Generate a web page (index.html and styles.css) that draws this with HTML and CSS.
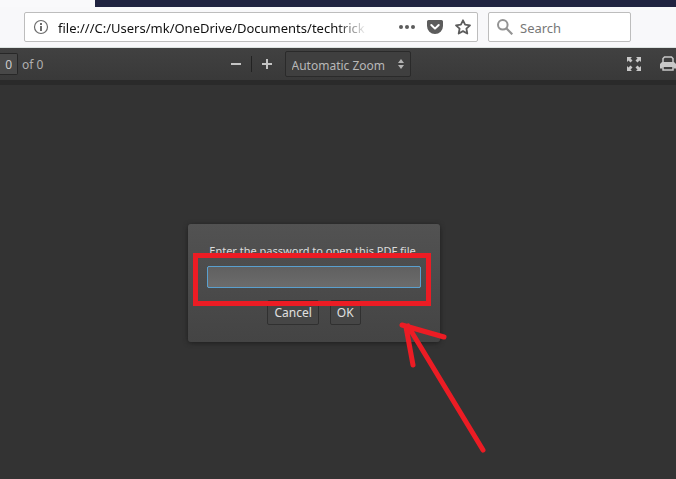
FILE: index.html
```
<!DOCTYPE html>
<html lang="en">

<head>
  <meta charset="utf-8">
  <title>PDF viewer</title>
  <link rel="stylesheet" href="styles.css">
</head>

<body>

  <!-- Browser chrome -->
  <div class="tabstrip"></div>
  <header class="navbar">
    <div class="urlbar">
      <svg class="icon-info" width="16" height="16" viewBox="0 0 16 16">
        <circle cx="8" cy="8" r="6.5" fill="none" stroke="#6b6b6b" stroke-width="1.2" />
        <path d="M7 7h2v5H7zM7 4h2v2H7z" fill="#6b6b6b" />
      </svg>
      <input class="url" type="text" aria-label="Address" value="file:///C:/Users/mk/OneDrive/Documents/techtrick">
      <button class="nav-button" aria-label="Page actions">
        <svg width="16" height="16" viewBox="0 0 16 16" fill="#5c5c5c">
          <circle cx="2" cy="8" r="2" />
          <circle cx="8" cy="8" r="2" />
          <circle cx="14" cy="8" r="2" />
        </svg>
      </button>
      <button class="nav-button" aria-label="Save to Pocket">
        <svg width="16" height="16" viewBox="0 0 16 16">
          <path d="M1.5 1h13A1.5 1.5 0 0 1 16 2.5V7A8 8 0 0 1 0 7V2.5A1.5 1.5 0 0 1 1.5 1z" fill="#5c5c5c" />
          <path d="M4.3 6L8 9.6L11.7 6" fill="none" stroke="#fff" stroke-width="2" stroke-linecap="round" stroke-linejoin="round" />
        </svg>
      </button>
      <button class="nav-button" aria-label="Bookmark">
        <svg width="16" height="16" viewBox="0 0 16 16">
          <path d="M8 1.3L10.1 5.7L15 6.3L11.4 9.6L12.3 14.5L8 12.1L3.7 14.5L4.6 9.6L1 6.3L5.9 5.7z" fill="none" stroke="#5c5c5c" stroke-width="1.8" stroke-linejoin="round" />
        </svg>
      </button>
    </div>
    <div class="searchbar">
      <svg width="16" height="16" viewBox="0 0 16 16" fill="none" stroke="#939393" stroke-width="2">
        <circle cx="5.8" cy="5.8" r="4.8" />
        <path d="M9.3 9.3L15.3 15.3" stroke-width="2.2" />
      </svg>
      <input class="search" type="text" aria-label="Search" placeholder="Search">
    </div>
  </header>

  <!-- Viewer toolbar -->
  <div class="toolbar">
    <div class="pages">
      <input class="page-number" type="text" id="page" value="0" aria-label="Page">
      <label for="page">of 0</label>
    </div>
    <div class="zoom">
      <button class="tool" aria-label="Zoom out">
        <svg width="12" height="12" viewBox="0 0 12 12"><path d="M1 5h10v2H1z" fill="#c4c4c4" /></svg>
      </button>
      <span class="separator"></span>
      <button class="tool" aria-label="Zoom in">
        <svg width="12" height="12" viewBox="0 0 12 12"><path d="M1 5h4V1h2v4h4v2H7v4H5V7H1z" fill="#c4c4c4" /></svg>
      </button>
      <div class="zoom-box">
        <select class="zoom-select" aria-label="Zoom">
          <option>Automatic Zoom</option>
        </select>
        <svg class="zoom-arrows" width="6" height="10" viewBox="0 0 6 10"><path d="M3 0L6 4H0zM0 6h6L3 10z" fill="#b4b4b4" /></svg>
      </div>
    </div>
    <div class="actions">
      <button class="tool" aria-label="Presentation mode">
        <svg width="16" height="16" viewBox="0 0 16 16" fill="#c8c8c8">
          <path d="M1 1h5L4.5 2.5L6.5 4.500L4.500 6.500L2.500 4.500L1 6zM15 1v5l-1.500-1.500L11.500 6.500L9.500 4.500l2-2L10 1zM1 15v-5l1.500 1.500L4.500 9.500l2 2l-2 2L6 15zM15 15h-5l1.500-1.500L9.500 11.500l2-2l2 2L15 10z" />
        </svg>
      </button>
      <button class="tool" aria-label="Print">
        <svg width="16" height="16" viewBox="0 0 16 16">
          <path d="M3 7V2.5L4.5 1H11.5L13 2.5V7" fill="none" stroke="#c8c8c8" stroke-width="1.5" />
          <path d="M2 6h12l2 2v4.5h-2.5V11h-11v1.5H0V8z" fill="#c8c8c8" />
          <path d="M3 11v3h10v-3" fill="none" stroke="#c8c8c8" stroke-width="1.5" />
        </svg>
      </button>
    </div>
  </div>

  <!-- Document area -->
  <main class="viewer">
    <form class="dialog">
      <label class="prompt" for="password">Enter the password to open this PDF file.</label>
      <input class="password" type="password" id="password">
      <div class="buttons">
        <button class="dialog-button" type="button">Cancel</button>
        <button class="dialog-button" type="button">OK</button>
      </div>
      <svg class="marker" width="300" height="232" viewBox="0 0 300 232" fill="none" stroke="#ec1c24">
        <path d="M7.5 31.5H240.5V79.5H7.5z" stroke-width="5" />
        <path d="M295 226L220 102M214 101L256 113M218 103L225 141" stroke-width="5" stroke-linecap="round" />
      </svg>
    </form>
  </main>

</body>

</html>
```
FILE: styles.css
```
* {
  box-sizing: border-box;
}

body {
  margin: 0;
  min-height: 100vh;
  display: flex;
  flex-direction: column;
  overflow: hidden;
  background-color: #333333;
  font-family: "Noto Sans", sans-serif;
  font-size: 12px;
}

input,
button,
select {
  font: inherit;
  outline: none;
}

button {
  cursor: pointer;
}

svg {
  display: block;
  flex: none;
}

.tabstrip {
  flex: none;
  height: 7px;
  background-image: linear-gradient(to right, #f9f9fb 95px, #202340 95px);
}

.navbar {
  display: flex;
  flex: none;
  gap: 10px;
  height: 41px;
  padding: 5px 45px 5px 24px;
  background-color: #f8f8fa;
  border-bottom: 1px solid #dde3e1;
}

.urlbar,
.searchbar {
  display: flex;
  align-items: center;
  height: 30px;
  background-color: #ffffff;
  border: 1px solid #bdbdbd;
  border-radius: 2px;
}

.urlbar {
  flex: 1;
  gap: 12px;
  padding: 0 6px 0 8px;
}

.url {
  flex: 1;
  min-width: 0;
  padding: 2px 0 0;
  margin-left: -3px;
  margin-right: 20px;
  border: 0;
  color: #111111;
  background: none;
  font-size: 13px;
  -webkit-mask-image: linear-gradient(to left, transparent, #000000 30px);
  mask-image: linear-gradient(to left, transparent, #000000 30px);
}

.nav-button,
.tool {
  padding: 0;
  border: 0;
  background: none;
}

.searchbar {
  width: 143px;
  gap: 7px;
  padding: 0 8px;
}

.search {
  width: 100%;
  padding: 2px 0 0;
  border: 0;
  background: none;
  font-size: 13px;
}

.search::placeholder {
  color: #777777;
}

.toolbar {
  display: grid;
  grid-template-columns: 1fr auto 1fr;
  align-items: center;
  flex: none;
  height: 32px;
  color: #b0b0b0;
  background-image: linear-gradient(#414141, #393939);
}

.pages,
.zoom,
.actions {
  display: flex;
  align-items: center;
}

.pages {
  gap: 4px;
}

.page-number {
  width: 18px;
  height: 22px;
  padding: 0 5px 0 0;
  border: 1px solid #272727;
  border-left: 0;
  border-radius: 0 2px 2px 0;
  text-align: right;
  color: #cccccc;
  background-color: #484848;
}

.zoom {
  gap: 9px;
  margin-right: 36px;
}

.separator {
  width: 1px;
  height: 16px;
  background-color: #222222;
}

.zoom-box {
  position: relative;
  margin-left: 3px;
}

.zoom-select {
  width: 126px;
  height: 26px;
  padding: 2px 6px 0;
  appearance: none;
  border: 1px solid #2a2a2a;
  border-radius: 2px;
  color: #b8b8b8;
  background-color: #3f3f3f;
}

.zoom-arrows {
  position: absolute;
  top: 8px;
  right: 7px;
  pointer-events: none;
}

.actions {
  justify-content: flex-end;
  gap: 18px;
}

.viewer {
  flex: 1;
  display: flex;
  justify-content: center;
  align-items: flex-start;
  padding: 139px 48px 0 0;
  border-top: 5px solid #2a2a2a;
}

.dialog {
  position: relative;
  display: flex;
  flex-direction: column;
  width: 252px;
  padding: 19px 19px 17px;
  border-radius: 3px;
  color: #dcdcdc;
  background-image: linear-gradient(#525252, #444444);
  box-shadow: 0 1px 5px #1e1e1e;
}

.prompt {
  height: 16px;
  line-height: 16px;
  text-align: center;
  white-space: nowrap;
  font-size: 11px;
}

.password {
  height: 22px;
  margin-top: 7px;
  padding: 0 4px;
  border: 1px solid #5aa0cf;
  border-radius: 2px;
  color: #ffffff;
  background-image: linear-gradient(#606060, #6c6c6c);
}

.buttons {
  display: flex;
  justify-content: center;
  gap: 11px;
  margin-top: 12px;
}

.dialog-button {
  height: 25px;
  padding: 0 6px;
  border: 1px solid #303030;
  border-radius: 2px;
  color: #e0e0e0;
  background-color: #464646;
}

.marker {
  position: absolute;
  top: 0;
  left: 0;
  pointer-events: none;
}
```
